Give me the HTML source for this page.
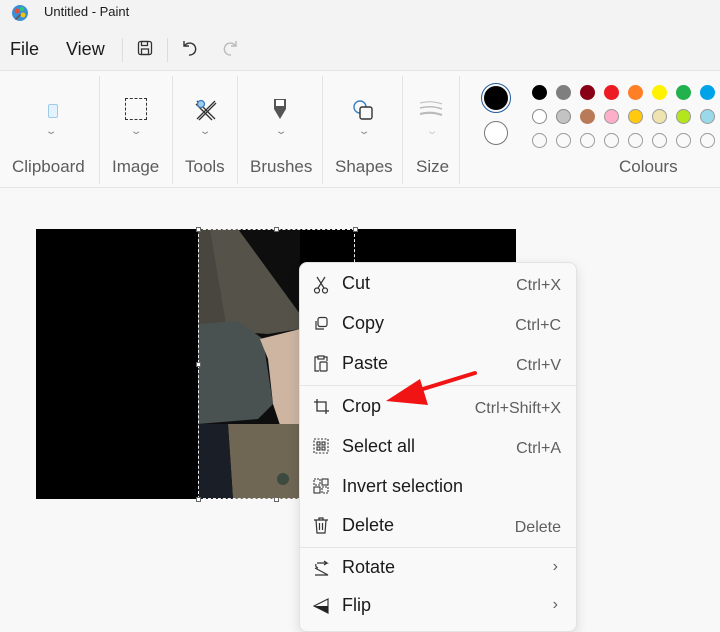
<!DOCTYPE html>
<html><head><meta charset="utf-8"><style>
*{margin:0;padding:0;box-sizing:border-box}
body{width:720px;height:619px;overflow:hidden;background:#f8f8f8;font-family:"Segoe UI","Liberation Sans",sans-serif;color:#1b1b1b;position:relative}
.a{position:absolute}
.lbl{position:absolute;top:157px;font-size:17px;color:#5c5c5c;white-space:nowrap}
.vs{position:absolute;top:76px;width:1px;height:108px;background:#e3e3e3}
.chev{position:absolute;top:126px;font-size:10px;color:#888;transform:scaleX(1.5)}
.c{position:absolute;width:15px;height:15px;border-radius:50%}
.mi{position:absolute;left:342px;font-size:18px;color:#1b1b1b;white-space:nowrap}
.sc{position:absolute;right:159px;font-size:16px;color:#5f5f5f;white-space:nowrap}
.ic{position:absolute;left:313px}
</style></head><body>
<div class="a" style="left:0;top:0;width:720px;height:70px;background:#f3f3f3"></div>
<svg class="a" style="left:11px;top:4px" width="18" height="18" viewBox="0 0 18 18"><circle cx="9" cy="9" r="8" fill="#3b8fd6"/><circle cx="6" cy="7" r="2.5" fill="#e74c3c"/><circle cx="11" cy="5" r="2" fill="#2ecc71"/><circle cx="12" cy="11" r="2.5" fill="#f1c40f"/><path d="M4 15 L9 10 L10 11 L5 16Z" fill="#6d4c41"/></svg>
<div class="a" style="left:44px;top:4px;font-size:13px;color:#1b1b1b">Untitled - Paint</div>
<div class="a" style="left:10px;top:39px;font-size:18px">File</div>
<div class="a" style="left:66px;top:39px;font-size:18px">View</div>
<div class="a" style="left:122px;top:38px;width:1px;height:24px;background:#dcdcdc"></div>
<svg class="a" style="left:137px;top:40px" width="16" height="16" viewBox="0 0 16 16" fill="none" stroke="#333" stroke-width="1.3"><rect x="1.5" y="1.5" width="13" height="13" rx="2"/><rect x="4.5" y="1.5" width="6" height="4"/><rect x="4.5" y="9" width="7" height="5.5"/></svg>
<div class="a" style="left:167px;top:38px;width:1px;height:24px;background:#dcdcdc"></div>
<svg class="a" style="left:181px;top:39px" width="18" height="18" viewBox="0 0 18 18" fill="none" stroke="#333" stroke-width="1.4"><path d="M3 2 V7 H8"/><path d="M3.5 7 A6 6 0 1 1 8 16"/></svg>
<svg class="a" style="left:221px;top:39px" width="18" height="18" viewBox="0 0 18 18" fill="none" stroke="#bbb" stroke-width="1.4"><path d="M15 2 V7 H10"/><path d="M14.5 7 A6 6 0 1 0 10 16"/></svg>
<div class="a" style="left:0;top:70px;width:720px;height:118px;background:#f9f9f9;border-top:1px solid #e5e5e5;border-bottom:1px solid #e5e5e5"></div>
<div class="vs" style="left:99px"></div><div class="vs" style="left:172px"></div><div class="vs" style="left:237px"></div><div class="vs" style="left:322px"></div><div class="vs" style="left:402px"></div><div class="vs" style="left:459px"></div>
<div class="a" style="left:48px;top:104px;width:10px;height:14px;border:1px solid #9dcbe8;background:#e3f2fc;border-radius:2px"></div>
<div class="a" style="left:125px;top:98px;width:22px;height:22px;border:1.3px dashed #333"></div>
<svg class="a" style="left:194px;top:98px" width="24" height="24" viewBox="0 0 24 24" fill="none" stroke="#333" stroke-width="1.3"><path d="M3 21 L21 3 M5 22 L22 5"/><path d="M3 3 L21 21 M2 6 L18 22"/><circle cx="7" cy="6" r="3.5" fill="#9dcbe8" stroke="#3a7fc1"/></svg>
<svg class="a" style="left:272px;top:97px" width="16" height="24" viewBox="0 0 16 24"><path d="M2 2 H14 V12 L8 22 L2 12Z" fill="#555"/><rect x="4" y="3" width="8" height="6" fill="#fff"/></svg>
<svg class="a" style="left:352px;top:99px" width="22" height="22" viewBox="0 0 22 22" fill="none" stroke-width="1.4"><circle cx="8" cy="8" r="6" stroke="#3a7fc1"/><rect x="8" y="8" width="12" height="12" rx="2" fill="#f9f9f9" stroke="#333"/></svg>
<svg class="a" style="left:419px;top:100px" width="24" height="20" viewBox="0 0 24 20" fill="none" stroke="#bbb"><path d="M1 3 Q12 0 23 4" stroke-width="1"/><path d="M1 8 Q12 5 23 9" stroke-width="1.5"/><path d="M1 14 Q12 11 23 15" stroke-width="2.2"/></svg>
<div class="chev" style="left:47px">⌄</div><div class="chev" style="left:132px">⌄</div><div class="chev" style="left:201px">⌄</div><div class="chev" style="left:277px">⌄</div><div class="chev" style="left:360px">⌄</div><div class="chev" style="left:428px;color:#ccc">⌄</div>
<div class="lbl" style="left:12px">Clipboard</div><div class="lbl" style="left:112px">Image</div><div class="lbl" style="left:185px">Tools</div><div class="lbl" style="left:250px">Brushes</div><div class="lbl" style="left:335px">Shapes</div><div class="lbl" style="left:416px">Size</div><div class="lbl" style="left:619px">Colours</div>
<div class="a" style="left:481px;top:83px;width:30px;height:30px;border-radius:50%;border:1.5px solid #1f5a9c"></div>
<div class="a" style="left:484px;top:86px;width:24px;height:24px;border-radius:50%;background:#000"></div>
<div class="a" style="left:484px;top:121px;width:24px;height:24px;border-radius:50%;background:#fff;border:1px solid #777"></div>
<div class="c" style="left:532px;top:85px;background:#000"></div><div class="c" style="left:556px;top:85px;background:#7f7f7f"></div><div class="c" style="left:580px;top:85px;background:#880015"></div><div class="c" style="left:604px;top:85px;background:#ed1c24"></div><div class="c" style="left:628px;top:85px;background:#ff7f27"></div><div class="c" style="left:652px;top:85px;background:#fff200"></div><div class="c" style="left:676px;top:85px;background:#22b14c"></div><div class="c" style="left:700px;top:85px;background:#00a2e8"></div>
<div class="c" style="left:532px;top:109px;background:#fff;border:1px solid #888"></div><div class="c" style="left:556px;top:109px;background:#c3c3c3;border:1px solid #888"></div><div class="c" style="left:580px;top:109px;background:#b97a57"></div><div class="c" style="left:604px;top:109px;background:#ffaec9;border:1px solid #999"></div><div class="c" style="left:628px;top:109px;background:#ffc90e;border:1px solid #999"></div><div class="c" style="left:652px;top:109px;background:#efe4b0;border:1px solid #999"></div><div class="c" style="left:676px;top:109px;background:#b5e61d;border:1px solid #999"></div><div class="c" style="left:700px;top:109px;background:#99d9ea;border:1px solid #999"></div>
<div class="c" style="left:532px;top:133px;border:1px solid #999"></div><div class="c" style="left:556px;top:133px;border:1px solid #999"></div><div class="c" style="left:580px;top:133px;border:1px solid #999"></div><div class="c" style="left:604px;top:133px;border:1px solid #999"></div><div class="c" style="left:628px;top:133px;border:1px solid #999"></div><div class="c" style="left:652px;top:133px;border:1px solid #999"></div><div class="c" style="left:676px;top:133px;border:1px solid #999"></div><div class="c" style="left:700px;top:133px;border:1px solid #999"></div>
<div class="a" style="left:36px;top:229px;width:480px;height:270px;background:#000"></div>
<svg class="a" style="left:198px;top:229px" width="102" height="270" viewBox="0 0 102 270">
<rect width="102" height="270" fill="#0e0e0e"/>
<polygon points="0,0 40,0 102,85 102,100 70,105 0,100" fill="#55524a"/>
<polygon points="0,0 12,0 28,95 0,100" fill="#48463e"/>
<polygon points="0,95 40,92 65,110 75,175 60,190 0,195" fill="#4a5251"/>
<polygon points="62,110 102,100 102,200 85,205 75,175 70,130" fill="#cdb5a2"/>
<polygon points="30,195 102,195 102,270 35,270" fill="#6f6654"/>
<polygon points="0,195 30,195 35,270 0,270" fill="#1a1e27"/>
<circle cx="85" cy="250" r="6" fill="#3c4a40"/>
</svg>
<div class="a" style="left:198px;top:229px;width:157px;height:270px;border:1px dashed #eee"></div>
<div class="a" style="left:196px;top:227px;width:5px;height:5px;background:#fff;border:1px solid #666"></div>
<div class="a" style="left:274px;top:227px;width:5px;height:5px;background:#fff;border:1px solid #666"></div>
<div class="a" style="left:353px;top:227px;width:5px;height:5px;background:#fff;border:1px solid #666"></div>
<div class="a" style="left:196px;top:362px;width:5px;height:5px;background:#fff;border:1px solid #666"></div>
<div class="a" style="left:196px;top:497px;width:5px;height:5px;background:#fff;border:1px solid #666"></div>
<div class="a" style="left:274px;top:497px;width:5px;height:5px;background:#fff;border:1px solid #666"></div>
<div class="a" style="left:299px;top:262px;width:278px;height:370px;background:#f9f9f9;border:1px solid #e2e2e2;border-radius:8px;box-shadow:0 4px 12px rgba(0,0,0,.12)"></div>
<div class="a" style="left:300px;top:385px;width:276px;height:1px;background:#e5e5e5"></div>
<div class="a" style="left:300px;top:547px;width:276px;height:1px;background:#e5e5e5"></div>
<div class="mi" style="top:273px">Cut</div><div class="sc" style="top:277px">Ctrl+X</div>
<div class="mi" style="top:313px">Copy</div><div class="sc" style="top:317px">Ctrl+C</div>
<div class="mi" style="top:353px">Paste</div><div class="sc" style="top:357px">Ctrl+V</div>
<div class="mi" style="top:396px">Crop</div><div class="sc" style="top:400px">Ctrl+Shift+X</div>
<div class="mi" style="top:436px">Select all</div><div class="sc" style="top:440px">Ctrl+A</div>
<div class="mi" style="top:476px">Invert selection</div>
<div class="mi" style="top:515px">Delete</div><div class="sc" style="top:519px">Delete</div>
<div class="mi" style="top:557px">Rotate</div><div class="sc" style="top:558px;right:162px">›</div>
<div class="mi" style="top:595px">Flip</div><div class="sc" style="top:596px;right:162px">›</div>
<svg class="ic" style="top:276px" width="16" height="18" viewBox="0 0 16 18" fill="none" stroke="#333" stroke-width="1.2"><path d="M4 1 L11 12 M12 1 L5 12"/><circle cx="4" cy="14.5" r="2.5"/><circle cx="12" cy="14.5" r="2.5"/></svg>
<svg class="ic" style="top:316px" width="16" height="16" viewBox="0 0 16 16" fill="none" stroke="#333" stroke-width="1.2"><rect x="5" y="1.5" width="9" height="9" rx="2"/><path d="M3 5 V13 H11"/></svg>
<svg class="ic" style="top:355px" width="16" height="18" viewBox="0 0 16 18" fill="none" stroke="#333" stroke-width="1.2"><path d="M5 2 H2 V16 H6"/><rect x="5" y="1" width="6" height="3"/><path d="M11 2 H14 V6"/><rect x="7" y="7" width="7" height="9" rx="1"/></svg>
<svg class="ic" style="top:398px" width="17" height="17" viewBox="0 0 17 17" fill="none" stroke="#333" stroke-width="1.3"><path d="M4 1 V13 H16 M1 4 H13 V16"/></svg>
<svg class="ic" style="top:438px" width="16" height="16" viewBox="0 0 16 16" fill="none" stroke="#333" stroke-width="1.1"><rect x="1" y="1" width="14" height="14" stroke-dasharray="2 1.5"/><rect x="4" y="4" width="3" height="3"/><rect x="9" y="4" width="3" height="3"/><rect x="4" y="9" width="3" height="3"/><rect x="9" y="9" width="3" height="3"/></svg>
<svg class="ic" style="top:478px" width="16" height="16" viewBox="0 0 16 16" fill="none" stroke="#333" stroke-width="1.1"><rect x="1" y="1" width="6" height="6" stroke-dasharray="2 1"/><rect x="9" y="1" width="6" height="6"/><rect x="1" y="9" width="6" height="6"/><rect x="9" y="9" width="6" height="6" stroke-dasharray="2 1"/></svg>
<svg class="ic" style="top:517px" width="16" height="17" viewBox="0 0 16 17" fill="none" stroke="#333" stroke-width="1.2"><path d="M1 3 H15 M6 3 V1 H10 V3"/><path d="M3 3 L4 16 H12 L13 3"/><path d="M6.5 6 V13 M9.5 6 V13"/></svg>
<svg class="ic" style="top:560px" width="17" height="16" viewBox="0 0 17 16" fill="none" stroke="#333" stroke-width="1.2"><path d="M2 15 H15 L2 8 M4 3 H14 L11 1 M14 3 L11 5 M3 4 Q2 7 5 8"/></svg>
<svg class="ic" style="top:598px" width="17" height="16" viewBox="0 0 17 16"><path d="M15 1 L1 8 L15 15Z" fill="none" stroke="#333" stroke-width="1.2"/><path d="M15 8 L1 8 L15 15Z" fill="#222"/></svg>
<svg class="a" style="left:380px;top:365px" width="100" height="50" viewBox="0 0 100 50"><path d="M95 8 L30 28" stroke="#f01414" stroke-width="4" stroke-linecap="round"/><polygon points="6,36 40,14 48,40" fill="#f01414"/></svg>
</body></html>
